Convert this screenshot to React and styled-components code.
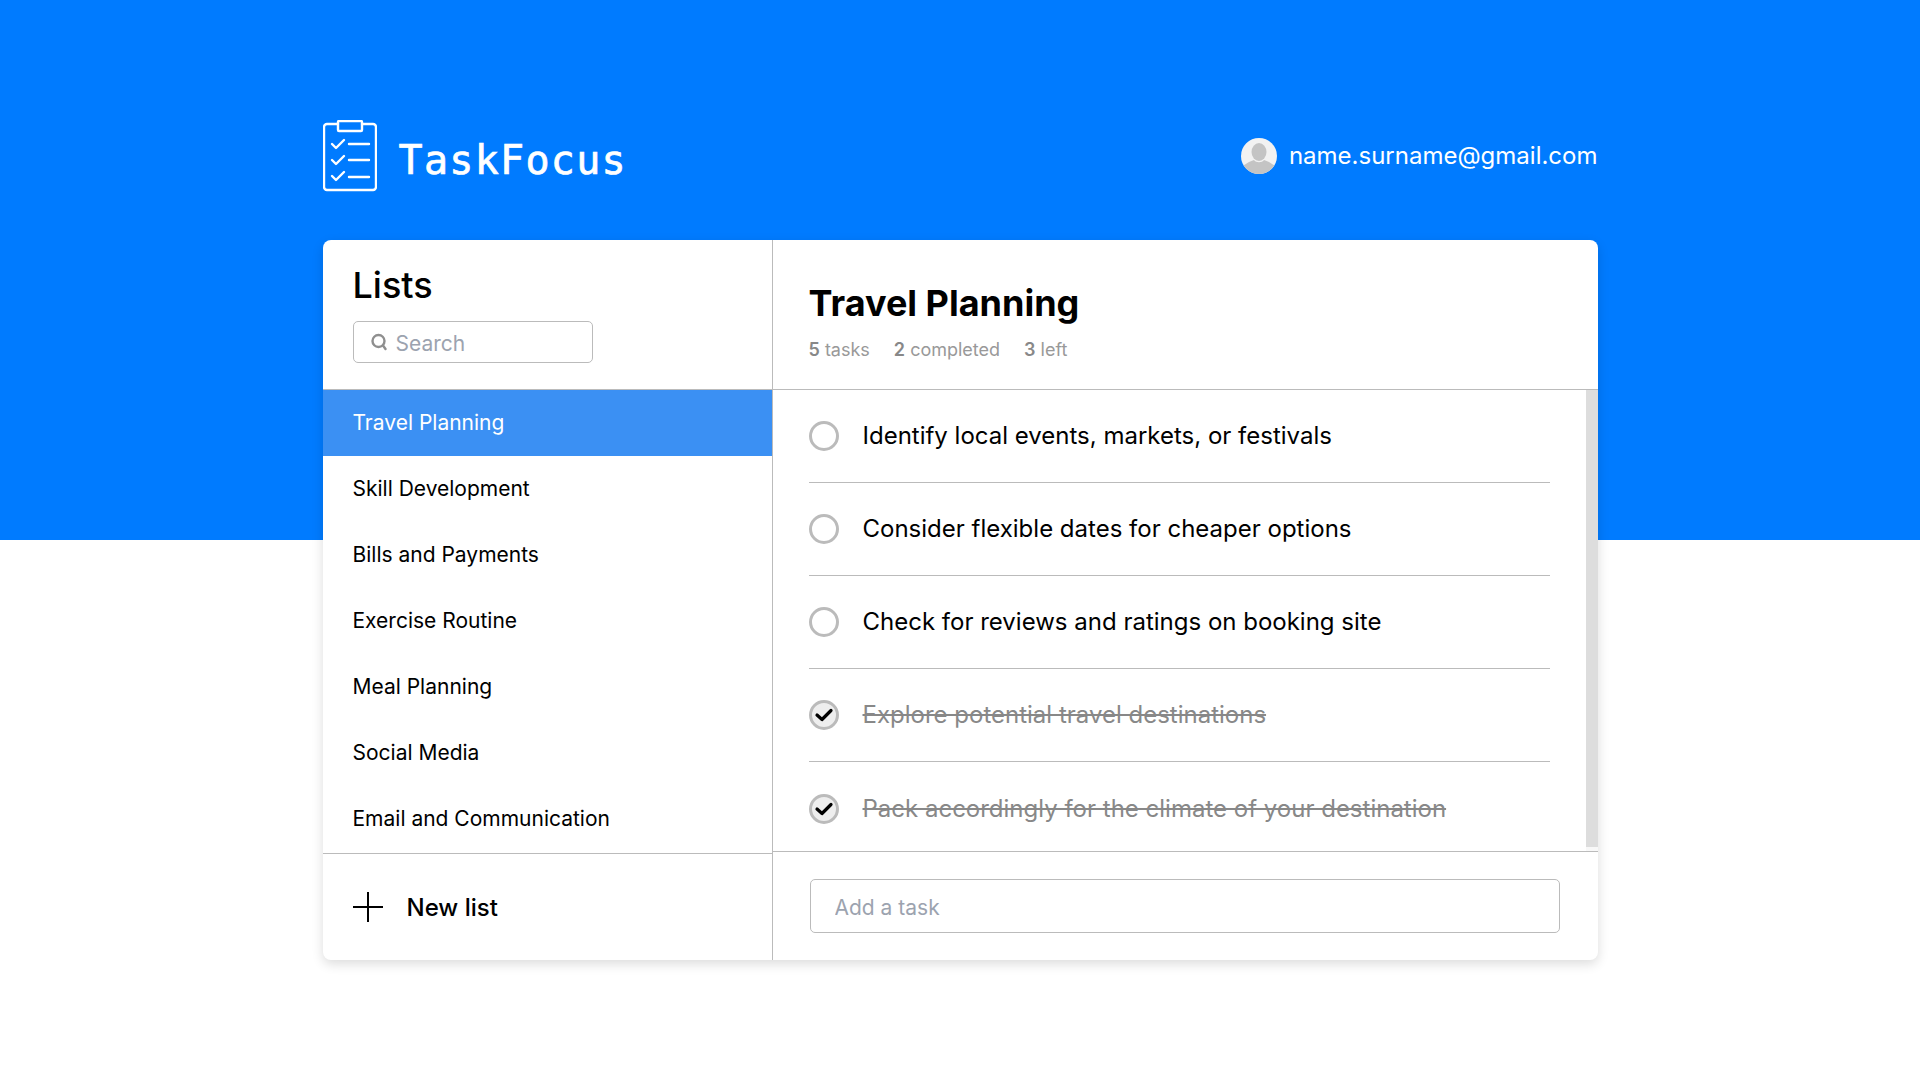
import React from "react";
import styled, { createGlobalStyle } from "styled-components";

const lists = [
  "Travel Planning",
  "Skill Development",
  "Bills and Payments",
  "Exercise Routine",
  "Meal Planning",
  "Social Media",
  "Email and Communication",
];

const tasks = [
  { text: "Identify local events, markets, or festivals", done: false },
  { text: "Consider flexible dates for cheaper options", done: false },
  { text: "Check for reviews and ratings on booking site", done: false },
  { text: "Explore potential travel destinations", done: true },
  { text: "Pack accordingly for the climate of your destination", done: true },
];

const GlobalStyle = createGlobalStyle`
  * {
    box-sizing: border-box;
  }

  body {
    margin: 0;
    font-family: "Inter", "Liberation Sans", sans-serif;
    color: #000;
    background: #fff;
  }
`;

const Page = styled.div`
  min-height: 1080px;
  background: linear-gradient(#007bff 540px, #fff 540px);
`;

const Wrapper = styled.div`
  width: 1275px;
  margin: 0 auto;
`;

const Header = styled.header`
  height: 240px;
  padding-top: 120px;
  display: flex;
  justify-content: space-between;
  align-items: flex-start;
`;

const Logo = styled.div`
  display: flex;
  align-items: flex-start;
  gap: 22px;
  color: #fff;
`;

const LogoText = styled.span`
  font-family: "DejaVu Sans Mono", monospace;
  font-size: 40px;
  line-height: 72px;
  letter-spacing: 1.3px;
  margin-top: 4px;
  -webkit-text-stroke: 0.7px #fff;
`;

const User = styled.div`
  display: flex;
  align-items: center;
  gap: 12px;
  height: 72px;
  color: #fff;
  font-size: 24px;

  span {
    margin-top: -1px;
  }
`;

const Card = styled.main`
  height: 720px;
  display: flex;
  background: #fff;
  border-radius: 8px;
  box-shadow: 0 4px 12px rgba(0, 0, 0, 0.14);
`;

const Sidebar = styled.aside`
  width: 450px;
  flex: none;
  display: flex;
  flex-direction: column;
  border-right: 1px solid #bbb;
`;

const SidebarHead = styled.div`
  height: 150px;
  padding: 23px 30px 0;
  border-bottom: 1px solid #bbb;
`;

const ListsTitle = styled.h2`
  margin: 0 0 14px;
  font-size: 36px;
  line-height: 44px;
  font-weight: 500;
`;

const SearchBox = styled.label`
  width: 240px;
  height: 42px;
  padding: 0 17px;
  display: flex;
  align-items: center;
  gap: 9px;
  border: 1px solid #bbb;
  border-radius: 5px;
`;

const SearchInput = styled.input`
  flex: 1;
  min-width: 0;
  padding: 2px 0 0;
  border: none;
  outline: none;
  font-family: inherit;
  font-size: 21px;

  &::placeholder {
    color: #9ca3af;
    opacity: 1;
  }
`;

const ListNav = styled.nav`
  flex: 1;
`;

const ListItem = styled.div`
  height: 66px;
  padding: 0 0 2px 30px;
  display: flex;
  align-items: center;
  font-size: 21px;
  background: ${(p) => (p.$active ? "#3b90f3" : "transparent")};
  color: ${(p) => (p.$active ? "#fff" : "#000")};
`;

const NewList = styled.div`
  height: 107px;
  padding-left: 30px;
  display: flex;
  align-items: center;
  gap: 24px;
  border-top: 1px solid #bbb;
  font-size: 24px;
  font-weight: 500;
`;

const Content = styled.section`
  flex: 1;
  min-width: 0;
  display: flex;
  flex-direction: column;
`;

const ContentHead = styled.div`
  height: 150px;
  padding: 36px 36px 0;
  border-bottom: 1px solid #bbb;
`;

const ContentTitle = styled.h1`
  margin: 0;
  font-size: 36px;
  line-height: 54px;
  font-weight: 700;
`;

const Stats = styled.div`
  margin-top: 9px;
  display: flex;
  gap: 24px;
  font-size: 18px;
  line-height: 22px;
  color: #999;

  b {
    font-weight: 600;
    color: #888;
  }
`;

const TaskArea = styled.div`
  height: 461px;
  display: flex;
`;

const TaskList = styled.div`
  flex: 1;
  min-width: 0;
  padding: 0 36px;
  overflow: hidden;
`;

const ScrollTrack = styled.div`
  width: 12px;
  flex: none;
  background: #f8f8f8;
`;

const ScrollThumb = styled.div`
  height: 457px;
  background: #ddd;
`;

const TaskRow = styled.div`
  height: ${(p) => (p.$last ? "94px" : "93px")};
  flex: none;
  display: flex;
  align-items: center;
  gap: 24px;
  border-bottom: ${(p) => (p.$last ? "none" : "1px solid #bbb")};
`;

const Circle = styled.span`
  width: 30px;
  height: 30px;
  flex: none;
  display: flex;
  align-items: center;
  justify-content: center;
  border: 3px solid #bbb;
  border-radius: 50%;
  background: ${(p) => (p.$done ? "#eee" : "#fff")};
`;

const TaskText = styled.span`
  font-size: 24px;
  line-height: 29px;
  margin-top: -1px;
  white-space: nowrap;
  color: ${(p) => (p.$done ? "#888" : "#000")};
  text-decoration: ${(p) => (p.$done ? "line-through" : "none")};
`;

const AddBar = styled.div`
  flex: 1;
  padding: 27px 38px 27px 37px;
  border-top: 1px solid #bbb;
`;

const AddInput = styled.input`
  display: block;
  width: 100%;
  height: 54px;
  padding: 2px 24px 0;
  border: 1px solid #bbb;
  border-radius: 5px;
  outline: none;
  font-family: inherit;
  font-size: 21px;

  &::placeholder {
    color: #9ca3af;
    opacity: 1;
  }
`;

const LogoIcon = () => (
  <svg width="54" height="72" viewBox="0 0 54 72" fill="none" stroke="#fff" strokeWidth="2.4" strokeLinecap="round" strokeLinejoin="round">
    <path d="M15 4H4a3 3 0 0 0-3 3v60a3 3 0 0 0 3 3h46a3 3 0 0 0 3-3V7a3 3 0 0 0-3-3H39" />
    <rect x="15" y="1" width="24" height="10" rx="1" />
    <path d="M9 24l4 4 8-8M26 24h20M9 40l4 4 8-8M26 40h20M9 56l4 4 8-8M26 57h20" />
  </svg>
);

const Avatar = () => (
  <svg width="36" height="36" viewBox="0 0 36 36">
    <clipPath id="avatar-clip">
      <circle cx="18" cy="18" r="18" />
    </clipPath>
    <g clipPath="url(#avatar-clip)">
      <rect width="36" height="36" fill="#f2f2f2" />
      <ellipse cx="18" cy="14" rx="7.5" ry="9" fill="#c4c4c4" />
      <path d="M0 36V29l8-5 5-2c2 3 8 3 10 0l5 2 8 5v7z" fill="#c4c4c4" />
    </g>
  </svg>
);

const SearchIcon = () => (
  <svg width="16" height="18" viewBox="0 0 16 18" fill="none" stroke="#8f8f8f" strokeWidth="2.4" strokeLinecap="round" style={{ flex: "none" }}>
    <circle cx="7.5" cy="8" r="6" />
    <path d="M12 12.5l2.5 3.5" />
  </svg>
);

const PlusIcon = () => (
  <svg width="30" height="30" viewBox="0 0 30 30" stroke="#000" strokeWidth="2">
    <path d="M15 0v30M0 15h30" />
  </svg>
);

const CheckIcon = () => (
  <svg width="20" height="16" viewBox="0 0 20 16" fill="none" stroke="#000" strokeWidth="3.2" strokeLinecap="round" strokeLinejoin="round">
    <path d="M3 8l5 4.5L17 3.5" />
  </svg>
);

export default function App() {
  return (
    <Page>
      <GlobalStyle />
      <Wrapper>
        <Header>
          <Logo>
            <LogoIcon />
            <LogoText>TaskFocus</LogoText>
          </Logo>
          <User>
            <Avatar />
            <span>name.surname@gmail.com</span>
          </User>
        </Header>
        <Card>
          <Sidebar>
            <SidebarHead>
              <ListsTitle>Lists</ListsTitle>
              <SearchBox>
                <SearchIcon />
                <SearchInput placeholder="Search" />
              </SearchBox>
            </SidebarHead>
            <ListNav>
              {lists.map((name, i) => (
                <ListItem key={name} $active={i === 0}>
                  {name}
                </ListItem>
              ))}
            </ListNav>
            <NewList>
              <PlusIcon />
              New list
            </NewList>
          </Sidebar>
          <Content>
            <ContentHead>
              <ContentTitle>Travel Planning</ContentTitle>
              <Stats>
                <span><b>5</b> tasks</span>
                <span><b>2</b> completed</span>
                <span><b>3</b> left</span>
              </Stats>
            </ContentHead>
            <TaskArea>
              <TaskList>
                {tasks.map((task, i) => (
                  <TaskRow key={task.text} $last={i === tasks.length - 1}>
                    <Circle $done={task.done}>{task.done && <CheckIcon />}</Circle>
                    <TaskText $done={task.done}>{task.text}</TaskText>
                  </TaskRow>
                ))}
              </TaskList>
              <ScrollTrack>
                <ScrollThumb />
              </ScrollTrack>
            </TaskArea>
            <AddBar>
              <AddInput placeholder="Add a task" />
            </AddBar>
          </Content>
        </Card>
      </Wrapper>
    </Page>
  );
}
